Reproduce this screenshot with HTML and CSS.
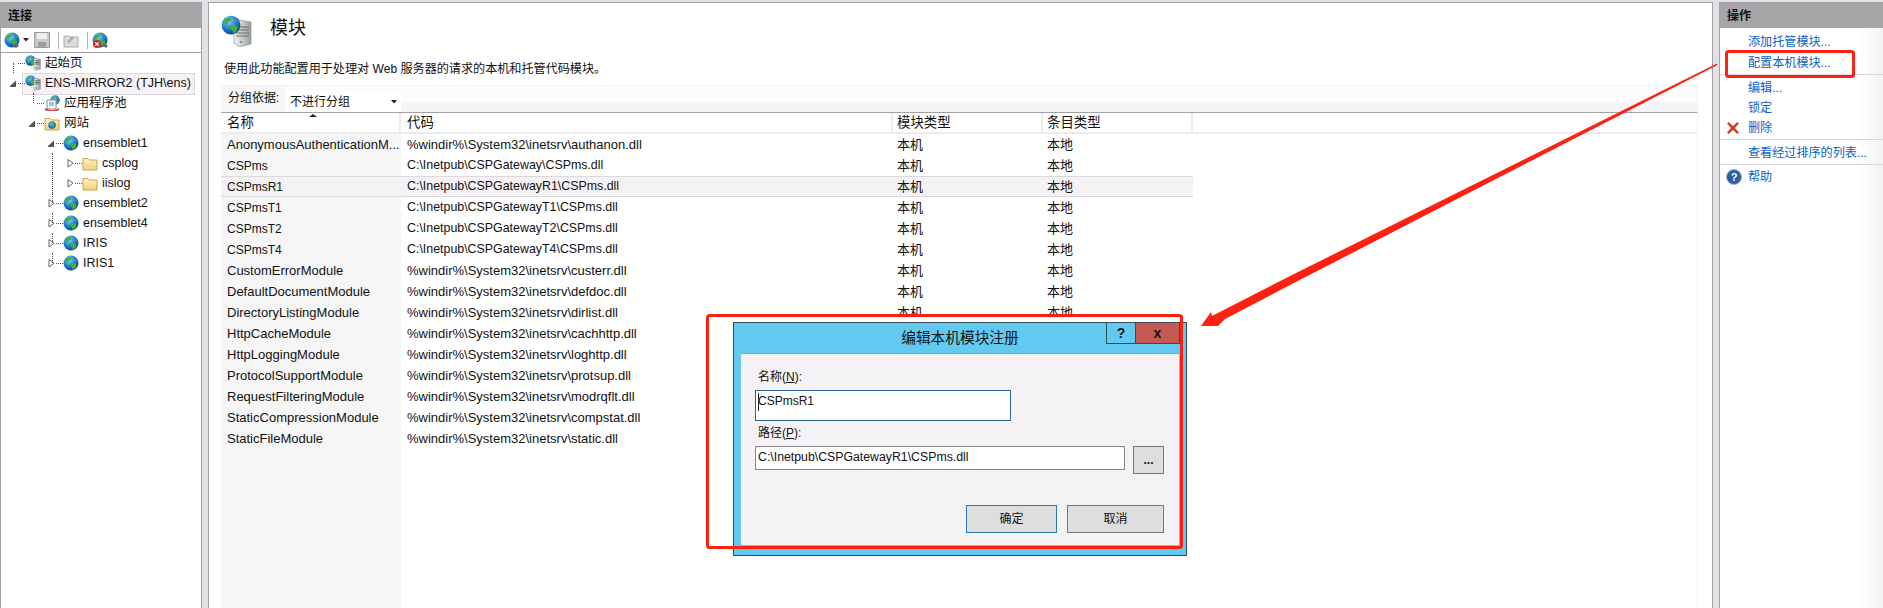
FILE: index.html
```html
<!DOCTYPE html>
<html lang="zh-CN">
<head>
    <meta charset="UTF-8">
    <title>IIS 模块</title>
    <link rel="stylesheet" href="styles.css">
</head>
<body>
    <!-- shared icons -->
    <svg class="defs" aria-hidden="true">
        <defs>
            <radialGradient id="sea" cx="38%" cy="30%" r="75%">
                <stop offset="0" stop-color="#8fd0f5"/>
                <stop offset=".55" stop-color="#1c7fd0"/>
                <stop offset="1" stop-color="#0b3f8c"/>
            </radialGradient>
            <linearGradient id="metal" x1="0" x2="1" y1="0" y2="0">
                <stop offset="0" stop-color="#f4f4f4"/>
                <stop offset="1" stop-color="#9a9ea4"/>
            </linearGradient>
            <linearGradient id="manila" x1="0" x2="0" y1="0" y2="1">
                <stop offset="0" stop-color="#fff2c0"/>
                <stop offset="1" stop-color="#f3cf77"/>
            </linearGradient>
            <symbol id="globe" viewBox="0 0 16 16">
                <circle cx="8" cy="8" r="7.5" fill="url(#sea)"/>
                <path d="M3 3.500c2-1.500 4-1.500 5.500-.5l-1 2-2 .5-.5 2-2.500-1zM7 8.500l3.500-.5 3 1.500-1 3.500-2.500 2-1-3-2-1.500zM12 3l2 2.500-1.500.5z" fill="#3fb13a"/>
            </symbol>
            <symbol id="server" viewBox="0 0 16 16">
                <path d="M6 1l8 1v12l-6 2-2-2z" fill="url(#metal)" stroke="#777" stroke-width=".6"/>
                <path d="M7 4h6M7 6h6M7 8h6" stroke="#555"/>
                <rect x="8" y="12" width="2" height="2" fill="#4caf3d"/>
            </symbol>
            <symbol id="folder" viewBox="0 0 16 16">
                <path d="M1 3.500h5l1.500 1.500H15v10H1z" fill="url(#manila)" stroke="#c9a64f"/>
            </symbol>
            <symbol id="open" viewBox="0 0 10 10">
                <path d="M2 9V8L8 2.500V9z" fill="#555"/>
            </symbol>
            <symbol id="closed" viewBox="0 0 10 10">
                <path d="M3 1.500V9L8 5.200z" fill="#fff" stroke="#666"/>
            </symbol>
        </defs>
    </svg>

    <div class="panes">
        <aside class="pane left">
            <div class="pane-head">连接</div>
            <div class="tools">
                <svg class="tool-ic" viewBox="0 0 16 16"><use href="#globe"/><path d="M8 14l4-3 3 3-3 2z" fill="#666"/></svg>
                <svg class="drop" viewBox="0 0 6 4"><path d="M0 0h6L3 3.500z" fill="#222"/></svg>
                <svg class="tool-ic save" viewBox="0 0 16 16"><path d="M.5.500h15v15H.5z" fill="#c9c9c9" stroke="#9a9a9a"/><path d="M3 1h10v6H3z" fill="#eee"/><path d="M4 10h8v5H4z" fill="#9d9d9d"/></svg>
                <i class="tool-sep"></i>
                <svg class="tool-ic up" viewBox="0 0 16 16"><path d="M1 4h5l1 1h8v10H1z" fill="#dcdcdc" stroke="#aaa"/><path d="M4 10l5-6 2 2-5 5z" fill="#a8a8a8"/></svg>
                <i class="tool-sep"></i>
                <svg class="tool-ic" viewBox="0 0 16 16"><use href="#globe"/><circle cx="5" cy="12" r="4" fill="#c9302c"/><path d="M3.300 10.300l3.400 3.400m0-3.400l-3.400 3.400" stroke="#fff" stroke-width="1.200"/><path d="M10 13l3-2 3 3-2 2z" fill="#666"/></svg>
            </div>
            <ul class="tree">
                <li class="node l0"><i class="guide g0 lower"></i><i class="slot"></i><i class="dots"></i><svg class="ic"><use href="#globe" width="11" height="11"/><use href="#server" x="4" y="2" width="13" height="14"/></svg><span>起始页</span></li>
                <li class="node l0 current"><svg class="slot"><use href="#open"/></svg><i class="dots"></i><svg class="ic"><use href="#globe" width="11" height="11"/><use href="#server" x="4" y="2" width="13" height="14"/></svg><span>ENS-MIRROR2 (TJH\ens)</span></li>
                <li class="node l1"><i class="guide g1 upper"></i><i class="slot"></i><i class="dots"></i><svg class="ic"><use href="#globe" x="6" width="10" height="10"/><path d="M3 5h9v9H3z" fill="#f5f5f5" stroke="#7f8fa8"/><path d="M5 8h5M5 10h5" stroke="#6f86b5"/><path d="M1 14q7 4 14 0" fill="none" stroke="#d2382c" stroke-width="1.500"/></svg><span>应用程序池</span></li>
                <li class="node l1"><svg class="slot"><use href="#open"/></svg><i class="dots"></i><svg class="ic"><use href="#folder"/><use href="#globe" x="4" y="6" width="8" height="8"/></svg><span>网站</span></li>
                <li class="node l2"><svg class="slot"><use href="#open"/></svg><i class="dots"></i><svg class="ic"><use href="#globe"/></svg><span>ensemblet1</span></li>
                <li class="node l3"><i class="guide g2"></i><svg class="slot"><use href="#closed"/></svg><i class="dots"></i><svg class="ic"><use href="#folder"/></svg><span>csplog</span></li>
                <li class="node l3"><i class="guide g2"></i><svg class="slot"><use href="#closed"/></svg><i class="dots"></i><svg class="ic"><use href="#folder"/></svg><span>iislog</span></li>
                <li class="node l2"><i class="guide g2 upper"></i><svg class="slot"><use href="#closed"/></svg><i class="dots"></i><svg class="ic"><use href="#globe"/></svg><span>ensemblet2</span></li>
                <li class="node l2"><i class="guide g2 upper"></i><svg class="slot"><use href="#closed"/></svg><i class="dots"></i><svg class="ic"><use href="#globe"/></svg><span>ensemblet4</span></li>
                <li class="node l2"><i class="guide g2 upper"></i><svg class="slot"><use href="#closed"/></svg><i class="dots"></i><svg class="ic"><use href="#globe"/></svg><span>IRIS</span></li>
                <li class="node l2"><i class="guide g2 upper"></i><svg class="slot"><use href="#closed"/></svg><i class="dots"></i><svg class="ic"><use href="#globe"/></svg><span>IRIS1</span></li>
            </ul>
        </aside>

        <main class="pane center">
            <div class="page-title">
                <svg class="title-ic" viewBox="0 0 32 32"><path d="M13 4l17 3v22l-12 3-5-4z" fill="url(#metal)" stroke="#8a8a8a" stroke-width=".6"/><path d="M15 12h13M15 15h13M15 18h13M15 21h13" stroke="#666"/><rect x="19" y="26" width="2" height="2" fill="#5bb545"/><use href="#globe" width="20" height="20"/></svg>
                <h1>模块</h1>
            </div>
            <p class="blurb">使用此功能配置用于处理对 Web 服务器的请求的本机和托管代码模块。</p>
            <div class="group-bar">
                <label>分组依据:</label>
                <div class="combo">不进行分组<svg class="drop" viewBox="0 0 6 4"><path d="M0 0h6L3 3.500z" fill="#222"/></svg></div>
            </div>
            <div class="list">
                <div class="row head">
                    <div class="sorted">名称</div><div>代码</div><div>模块类型</div><div>条目类型</div>
                </div>
                <div class="row"><div>AnonymousAuthenticationM...</div><div>%windir%\System32\inetsrv\authanon.dll</div><div>本机</div><div>本地</div></div>
                <div class="row gw"><div>CSPms</div><div>C:\Inetpub\CSPGateway\CSPms.dll</div><div>本机</div><div>本地</div></div>
                <div class="row gw selected"><div>CSPmsR1</div><div>C:\Inetpub\CSPGatewayR1\CSPms.dll</div><div>本机</div><div>本地</div></div>
                <div class="row gw"><div>CSPmsT1</div><div>C:\Inetpub\CSPGatewayT1\CSPms.dll</div><div>本机</div><div>本地</div></div>
                <div class="row gw"><div>CSPmsT2</div><div>C:\Inetpub\CSPGatewayT2\CSPms.dll</div><div>本机</div><div>本地</div></div>
                <div class="row gw"><div>CSPmsT4</div><div>C:\Inetpub\CSPGatewayT4\CSPms.dll</div><div>本机</div><div>本地</div></div>
                <div class="row"><div>CustomErrorModule</div><div>%windir%\System32\inetsrv\custerr.dll</div><div>本机</div><div>本地</div></div>
                <div class="row"><div>DefaultDocumentModule</div><div>%windir%\System32\inetsrv\defdoc.dll</div><div>本机</div><div>本地</div></div>
                <div class="row"><div>DirectoryListingModule</div><div>%windir%\System32\inetsrv\dirlist.dll</div><div>本机</div><div>本地</div></div>
                <div class="row"><div>HttpCacheModule</div><div>%windir%\System32\inetsrv\cachhttp.dll</div></div>
                <div class="row"><div>HttpLoggingModule</div><div>%windir%\System32\inetsrv\loghttp.dll</div></div>
                <div class="row"><div>ProtocolSupportModule</div><div>%windir%\System32\inetsrv\protsup.dll</div></div>
                <div class="row"><div>RequestFilteringModule</div><div>%windir%\System32\inetsrv\modrqflt.dll</div></div>
                <div class="row"><div>StaticCompressionModule</div><div>%windir%\System32\inetsrv\compstat.dll</div></div>
                <div class="row"><div>StaticFileModule</div><div>%windir%\System32\inetsrv\static.dll</div></div>
            </div>
        </main>

        <aside class="pane right">
            <div class="pane-head">操作</div>
            <ul class="actions">
                <li class="act">添加托管模块...</li>
                <li class="act rule rule-add">配置本机模块...</li>
                <li class="act">编辑...</li>
                <li class="act">锁定</li>
                <li class="act rule rule-del"><svg class="act-ic" viewBox="0 0 14 14"><path d="M1 2.500L2.500 1 7 5l4.500-4L13 2.500 9 7l4 4.500-1.500 1.500L7 9l-4.500 4L1 11.500 5 7z" fill="#d33a2e"/></svg>删除</li>
                <li class="act rule rule-sort">查看经过排序的列表...</li>
                <li class="act"><svg class="act-ic help" viewBox="0 0 16 16"><circle cx="8" cy="8" r="7.500" fill="#2c5fa8" stroke="#9db2cc"/><text x="8" y="12" text-anchor="middle" class="help-q">?</text></svg>帮助</li>
            </ul>
        </aside>
    </div>

    <!-- pasted-in dialog, with the white margin of its crop -->
    <div class="crop"></div>
    <div class="dialog">
        <div class="dlg-title">
            <span class="dlg-name">编辑本机模块注册</span>
            <div class="dlg-btns"><span class="dlg-help">?</span><span class="dlg-close">x</span></div>
        </div>
        <div class="dlg-body">
            <div class="field-label">名称(<u>N</u>):</div>
            <div class="input tall"><i class="caret"></i>CSPmsR1</div>
            <div class="field-label">路径(<u>P</u>):</div>
            <div class="path-row">
                <div class="input">C:\Inetpub\CSPGatewayR1\CSPms.dll</div>
                <div class="btn browse">...</div>
            </div>
            <div class="dlg-foot">
                <div class="btn ok">确定</div>
                <div class="btn cancel">取消</div>
            </div>
        </div>
    </div>

    <!-- red markup drawn on top of the screenshot -->
    <svg class="markup" viewBox="0 0 1883 608">
        <rect x="1726.500" y="51.500" width="127" height="25" rx="2"/>
        <rect x="707.500" y="315.500" width="474" height="232" rx="2"/>
        <polygon class="arrow" points="1201,326 1211,312 1212,316 1290,276 1717,63.500 1717.500,65 1290,285 1225,319 1218,326"/>
    </svg>
</body>
</html>
```

FILE: styles.css
```css
* {
    box-sizing: border-box;
}
html, body {
    margin: 0;
    height: 608px;
    overflow: hidden;
}
body {
    position: relative;
    background: #e4e1e6;
    color: #111;
    font: 13px/1 "Liberation Sans", "Noto Sans CJK SC", sans-serif;
    padding-top: 2px;
}
ul {
    list-style: none;
    margin: 0;
    padding: 0;
}
.defs {
    position: absolute;
    width: 0;
    height: 0;
}

/* three panes */
.panes {
    display: flex;
    gap: 6px;
    height: 606px;
}
.pane {
    background: #fff;
    border: 1px solid #a2a2a4;
    border-bottom: 0;
    display: flex;
    flex-direction: column;
}
.left {
    width: 202px;
}
.center {
    flex: 1;
    padding-left: 12px;
    padding-right: 14px;
}
.right {
    width: 164px;
    border-right: 0;
    background: linear-gradient(90deg, #fff 85%, #f3f3f3);
}
.pane-head {
    height: 25px;
    flex: none;
    background: #a6a5a8;
    padding: 7px 0 0 7px;
    font-size: 12px;
    font-weight: bold;
}

/* left toolbar */
.tools {
    height: 25px;
    flex: none;
    display: flex;
    align-items: center;
    padding-left: 3px;
    border-bottom: 1px solid #a2a2a4;
}
.tool-ic {
    width: 16px;
    height: 16px;
}
.tools .drop {
    margin: 0 5px 0 3px;
}
.drop {
    width: 6px;
    height: 4px;
}
.tool-sep {
    width: 1px;
    height: 17px;
    background: #b5b5b5;
    margin: 0 4px 0 8px;
}

/* tree */
.tree {
    font-size: 12.5px;
}
.node {
    position: relative;
    height: 20px;
    display: flex;
    align-items: center;
}
.node span {
    margin-left: 4px;
    white-space: nowrap;
}
.l0 { padding-left: 7px; }
.l1 { padding-left: 26px; }
.l2 { padding-left: 45px; }
.l3 { padding-left: 64px; }
.slot {
    width: 10px;
    height: 10px;
    flex: none;
}
.dots {
    width: 7px;
    flex: none;
    border-top: 1px dotted #555;
}
.ic {
    width: 16px;
    height: 16px;
    flex: none;
}
.current::before {
    content: "";
    position: absolute;
    left: 21px;
    top: 0;
    width: 171px;
    height: 20px;
    background: #f5f2f6;
    border: 1px solid #dcd9de;
}
.current > * {
    position: relative;
}
.guide {
    position: absolute;
    top: 0;
    bottom: 0;
    border-left: 1px dotted #555;
}
.guide.lower {
    top: 10px;
}
.guide.upper {
    bottom: 10px;
}
.g0 { left: 12px; }
.g1 { left: 32px; }
.g2 { left: 51px; }

/* center */
.page-title {
    height: 44px;
    flex: none;
    display: flex;
    align-items: center;
    padding-top: 12px;
}
.title-ic {
    width: 32px;
    height: 32px;
    flex: none;
}
.page-title h1 {
    margin: -6px 0 0 17px;
    font-size: 18px;
    font-weight: normal;
}
.blurb {
    margin: 0;
    height: 38px;
    flex: none;
    padding: 16px 0 0 3px;
    font-size: 12.1px;
}
.group-bar {
    height: 28px;
    flex: none;
    display: flex;
    align-items: flex-end;
    background: linear-gradient(#fdfbfd 62%, #f6f4f6 62%);
    border-top: 1px solid #f2f0f2;
    border-right: 1px solid #f2f0f2;
    border-bottom: 1px solid #a2a2a4;
    font-size: 12px;
}
.group-bar label {
    width: 65px;
    padding: 0 0 8px 7px;
    background: #f6f6f6;
    height: 26px;
    display: flex;
    align-items: flex-end;
    white-space: nowrap;
}
.combo {
    width: 115px;
    height: 22px;
    background: #fff;
    display: flex;
    align-items: center;
    justify-content: space-between;
    padding: 1px 4px 0;
}
.list {
    flex: 1;
    background: linear-gradient(90deg, #f6f6f6 180px, #fff 180px);
    border-right: 1px solid #f2f0f2;
}
.row {
    display: grid;
    grid-template-columns: 180px 492px 150px 150px;
    width: 972px;
    height: 21px;
    align-items: center;
    white-space: nowrap;
}
.row > div {
    padding-left: 6px;
}
.row > div:nth-child(n+3) {
    padding-left: 4px;
}
.row.gw > div {
    font-size: 12.4px;
}
.row.gw > div:first-child {
    font-size: 12px;
}
.row.gw > div:nth-child(n+3) {
    font-size: 13px;
}
.head {
    width: auto;
    background: #fff;
    border-bottom: 2px solid #ececec;
}
.head > div {
    position: relative;
    height: 19px;
    line-height: 19px;
    font-size: 13.4px;
    border-right: 2px solid #ececec;
}
.sorted::after {
    content: "";
    position: absolute;
    left: 88px;
    top: 1px;
    border: 4px solid transparent;
    border-top: 0;
    border-bottom: 3px solid #222;
}
.selected {
    background: #f5f2f6;
    border-top: 1px solid #dcd9de;
    border-bottom: 1px solid #dcd9de;
}

/* actions */
.actions {
    color: #0a62c4;
    font-size: 12.1px;
    padding-top: 4px;
}
.act {
    position: relative;
    height: 20px;
    display: flex;
    align-items: center;
    padding-left: 28px;
}
.act.rule {
    align-items: flex-start;
    border-bottom: 1px solid #d8d8d8;
}
.rule-add {
    height: 23px;
    padding-top: 5px;
    margin-bottom: 3px;
}
.rule-del {
    height: 22px;
    padding-top: 4px;
}
.rule-sort {
    height: 25px;
    padding-top: 7px;
    margin-bottom: 2px;
}
.act-ic {
    position: absolute;
    left: 6px;
    top: 3px;
    width: 14px;
    height: 14px;
}
.help {
    width: 16px;
    height: 16px;
    top: 2px;
}
.help-q {
    fill: #fff;
    font: bold 11px "Liberation Sans", sans-serif;
}

/* dialog */
.crop {
    position: absolute;
    left: 707px;
    top: 315px;
    width: 475px;
    height: 233px;
    background: #fff;
}
.dialog {
    position: absolute;
    left: 733px;
    top: 322px;
    width: 454px;
    height: 234px;
    background: #62caf0;
    border: 1px solid #3a4a52;
    display: flex;
    flex-direction: column;
    padding: 0 7px 10px;
}
.dlg-title {
    position: relative;
    height: 30px;
    flex: none;
    display: flex;
    justify-content: center;
    align-items: center;
    font-size: 14.7px;
}
.dlg-btns {
    position: absolute;
    right: -1px;
    top: 0;
    display: flex;
    height: 21px;
    font-weight: bold;
    font-size: 14px;
}
.dlg-btns span {
    display: flex;
    align-items: center;
    justify-content: center;
    border: 1px solid #3a4a52;
    border-top: 0;
}
.dlg-help {
    width: 29px;
    border-right: 0 !important;
}
.dlg-close {
    width: 45px;
    background: #c45a52;
}
.dlg-body {
    flex: 1;
    background: #f5f2f6;
    border-top: 1px solid #7aa9c6;
    padding: 15px 15px 0 14px;
    font-size: 12px;
}
.field-label {
    height: 21px;
    padding-left: 3px;
    line-height: 16px;
}
.field-label u {
    text-underline-offset: 1px;
}
.input {
    background: #fff;
    border: 1px solid #888;
    height: 24px;
    flex: 1;
    padding: 4px 2px;
    font-size: 12.3px;
}
.input.tall {
    width: 256px;
    height: 31px;
    margin-bottom: 4px;
    border-color: #2a6496;
    position: relative;
    font-size: 12px;
}
.caret {
    position: absolute;
    left: 2px;
    top: 2px;
    height: 18px;
    border-left: 1px solid #222;
}
.path-row {
    display: flex;
    align-items: flex-start;
    gap: 8px;
}
.btn {
    background: #dedede;
    border: 1px solid #777;
    display: flex;
    align-items: center;
    justify-content: center;
    height: 28px;
}
.browse {
    width: 31px;
    font-weight: bold;
}
.dlg-foot {
    display: flex;
    justify-content: flex-end;
    gap: 10px;
    margin-top: 31px;
}
.ok {
    width: 91px;
    border-color: #2a7ab8;
}
.cancel {
    width: 97px;
}

/* red markup */
.markup {
    position: absolute;
    left: 0;
    top: 0;
    width: 1883px;
    height: 608px;
    pointer-events: none;
}
.markup rect {
    fill: none;
    stroke: #ff2012;
    stroke-width: 3;
}
.arrow {
    fill: #ff2012;
}
```
